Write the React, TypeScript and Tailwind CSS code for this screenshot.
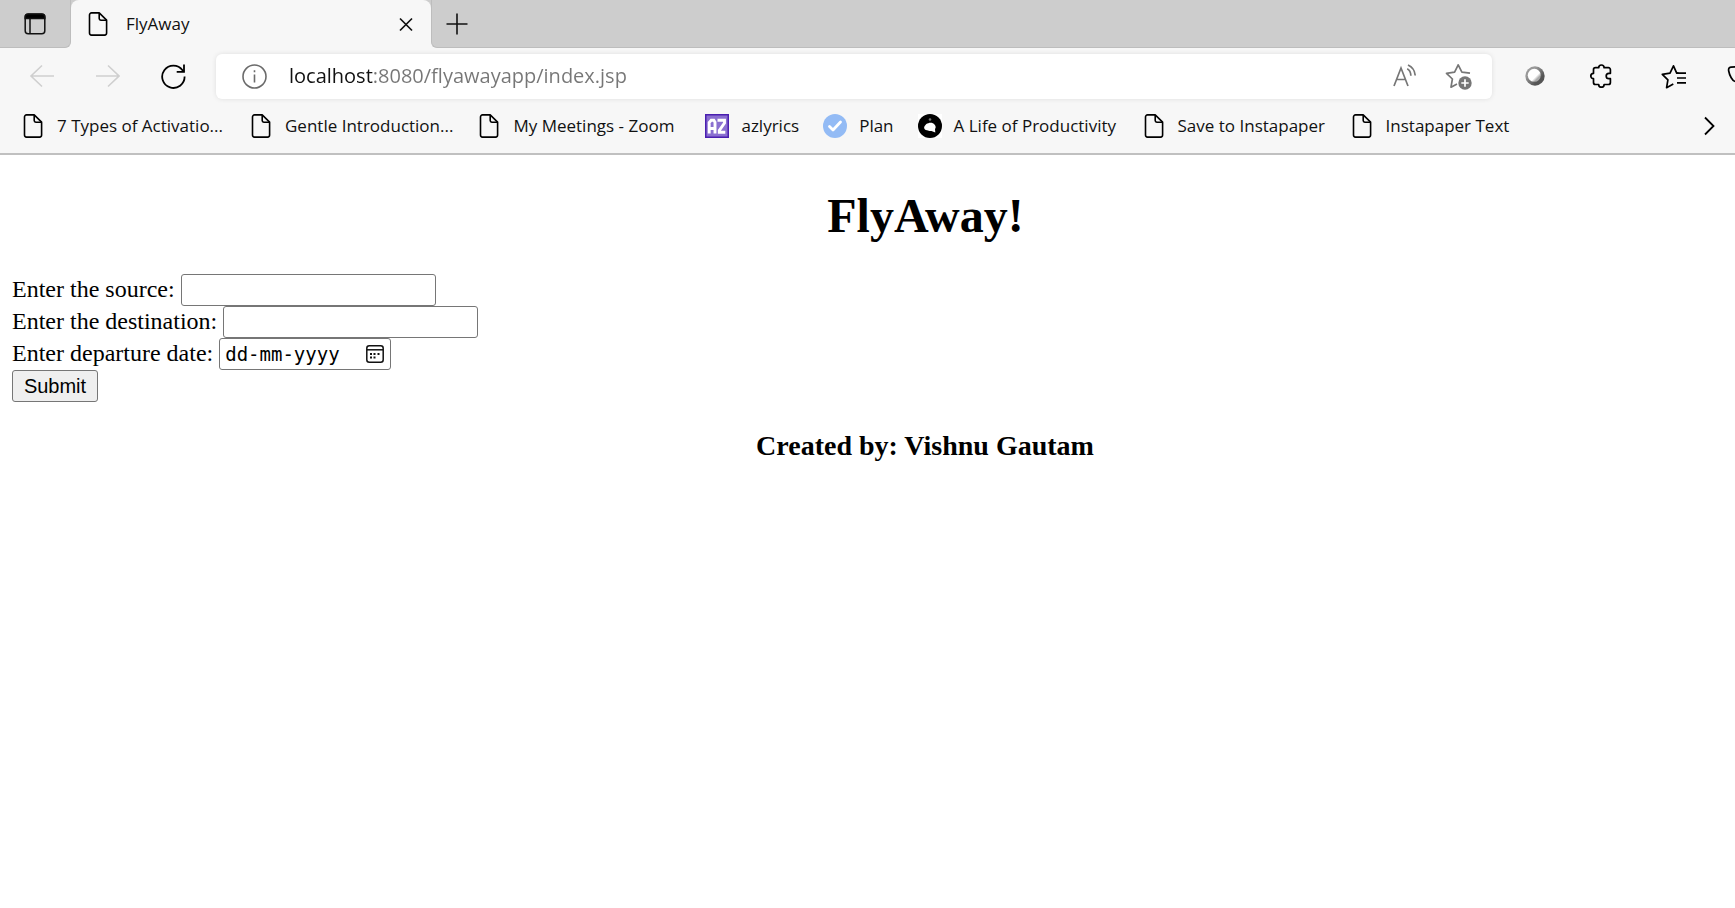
import type { ReactNode } from "react";

function FileIcon() {
  return (
    <svg viewBox="0 0 24 24" className="size-6 shrink-0" fill="none" stroke="#000" strokeWidth="1.6" strokeLinejoin="round">
      <path d="M5.500 0.900h7.700l7.400 7.200v13a2 2 0 0 1-2 2H5.500a2 2 0 0 1-2-2V2.900a2 2 0 0 1 2-2z" />
      <path d="M13.200 1v5.600a1.600 1.600 0 0 0 1.600 1.600h5.700" />
    </svg>
  );
}

function AzIcon() {
  return (
    <svg viewBox="0 0 24 24" className="size-6 shrink-0">
      <rect x="0.75" y="0.75" width="22.5" height="22.5" fill="#8a6fd0" stroke="#4a1fb0" strokeWidth="1.5" />
      <path d="M4.200 19.500V8.500l2-2.300h2.600l1.200 2v11.300M4.500 14.500h5.500M12.500 6.300h7V9l-5.200 7.500v1.800h6" fill="none" stroke="#fff" strokeWidth="2.900" />
    </svg>
  );
}

function PlanIcon() {
  return (
    <svg viewBox="0 0 24 24" className="size-6 shrink-0">
      <circle cx="12" cy="12" r="12" fill="#93bbf5" />
      <path d="M6.500 12.500l3.500 3.500 7.500-8" fill="none" stroke="#fff" strokeWidth="2.800" strokeLinecap="round" strokeLinejoin="round" />
    </svg>
  );
}

function ProductivityIcon() {
  return (
    <svg viewBox="0 0 24 24" className="size-6 shrink-0">
      <rect width="24" height="24" fill="#fff" />
      <circle cx="12" cy="12" r="12" fill="#000" />
      <circle cx="12" cy="5.500" r="1.300" fill="#777" />
      <path d="M7.500 11c1-1.500 2.500-1.500 4-2.200 2-.3 4 .2 5 1.700 1.500 1.500 1.500 3.500.5 4.500l.3 3.500-3.800-1.500c-2 .5-3-.7-4.500-.7-3.500-.5-3.500-3.800-1.500-5.300z" fill="#fff" />
    </svg>
  );
}

const bookmarks: { label: string; icon: ReactNode; width: string }[] = [
  { label: "7 Types of Activatio...", icon: <FileIcon />, width: "min-w-[168px]" },
  { label: "Gentle Introduction...", icon: <FileIcon />, width: "min-w-[168px]" },
  { label: "My Meetings - Zoom", icon: <FileIcon />, width: "min-w-[168px]" },
  { label: "azlyrics", icon: <AzIcon />, width: "min-w-[56px]" },
  { label: "Plan", icon: <PlanIcon />, width: "min-w-[33px]" },
  { label: "A Life of Productivity", icon: <ProductivityIcon />, width: "min-w-[164px]" },
  { label: "Save to Instapaper", icon: <FileIcon />, width: "min-w-[148px]" },
  { label: "Instapaper Text", icon: <FileIcon />, width: "min-w-[120px]" },
];

function TabStrip() {
  return (
    <div className="flex h-12 items-stretch overflow-hidden bg-[#f7f7f7]">
      <div className="flex w-[71px] items-center justify-center rounded-br-md border-r border-b border-[#bdbdbd] bg-[#cdcdcd]">
        <button type="button" aria-label="Tab actions" className="flex">
          <svg viewBox="0 0 24 24" className="size-6" fill="none" stroke="#111" strokeWidth="1.5">
            <rect x="2.200" y="2.200" width="19.600" height="19.600" rx="3" />
            <path d="M2.200 6.500V5a3 3 0 0 1 3-3h13.600a3 3 0 0 1 3 3v1.500z" fill="#000" />
            <path d="M7 6v16" />
          </svg>
        </button>
      </div>
      <div className="flex w-[360px] bg-[#cdcdcd]">
        <div className="flex flex-1 items-center rounded-t-lg bg-[#f7f7f7] px-[15px]">
          <FileIcon />
          <span className="flex-1 pl-4 text-[17px] text-[#111]">FlyAway</span>
          <button type="button" aria-label="Close tab" className="flex">
            <svg viewBox="0 0 20 20" className="size-5" fill="none" stroke="#111" strokeWidth="1.700">
              <path d="M4 4.500l12 12M16 4.500l-12 12" />
            </svg>
          </button>
        </div>
      </div>
      <div className="flex flex-1 items-center rounded-bl-md border-b border-l border-[#bdbdbd] bg-[#cdcdcd] pl-[13px]">
        <button type="button" aria-label="New tab" className="flex">
          <svg viewBox="0 0 24 24" className="size-6" fill="none" stroke="#111" strokeWidth="1.600">
            <path d="M12 1.500v21M1.500 12h21" />
          </svg>
        </button>
      </div>
    </div>
  );
}

function Toolbar() {
  return (
    <div className="flex h-14 items-center pl-[29px]">
      <div className="flex w-[187px] shrink-0 items-center gap-[41px]">
        <button type="button" aria-label="Back" className="flex" disabled>
          <svg viewBox="0 0 25 24" className="h-6 w-[25px]" fill="none" stroke="#cfcfcf" strokeWidth="1.600">
            <path d="M13 1.500L2 12l11 10.500M2 12h23" />
          </svg>
        </button>
        <button type="button" aria-label="Forward" className="flex" disabled>
          <svg viewBox="0 0 25 24" className="h-6 w-[25px]" fill="none" stroke="#cfcfcf" strokeWidth="1.600">
            <path d="M13 1.500L24 12 13 22.500M24 12H1" />
          </svg>
        </button>
        <button type="button" aria-label="Refresh" className="flex">
          <svg viewBox="0 0 25 25" className="size-[25px]" fill="none" stroke="#000" strokeWidth="1.800">
            <path d="M23.600 12.500A11.200 11.200 0 1 1 21.500 6.200l1.500 1.500" />
            <path d="M23 .5v7.300h-7.300" />
          </svg>
        </button>
      </div>
      <div className="flex h-[45px] flex-1 items-center rounded-md bg-white pr-[20px] pl-[26px] shadow-[0_0_5px_rgba(0,0,0,0.1)]">
        <svg viewBox="0 0 25 25" className="size-[25px] shrink-0" fill="none" stroke="#6b6b6b" strokeWidth="1.600">
          <circle cx="12.500" cy="12.500" r="11.500" />
          <path d="M12.500 10.500v8M12.500 6.300v2" />
        </svg>
        <input
          aria-label="Address"
          defaultValue="localhost:8080/flyawayapp/index.jsp"
          className="ml-[22px] min-w-0 flex-1 bg-[linear-gradient(to_right,#111_84px,#767676_84px)] bg-clip-text text-[20px] text-transparent outline-none"
        />
        <button type="button" aria-label="Read aloud" className="flex">
          <svg viewBox="0 0 24 24" className="size-6" fill="none" stroke="#767676" strokeWidth="1.700">
            <path d="M2 22L9 4 16 22M4.800 15.500h8.500" />
            <path d="M15.200 4.800c2.500 1.200 3.500 3.500 3.700 7M16 1c4.500 2 6.800 5 7.200 10.500" />
          </svg>
        </button>
        <button type="button" aria-label="Add to favorites" className="ml-[29px] flex">
          <svg viewBox="0 0 27 27" className="size-[27px]" fill="none" stroke="#767676" strokeWidth="1.700" strokeLinejoin="round">
            <path d="M25 10.200l-8.100-1.100L13.200 1.800 9.600 9.100 1.500 10.300l5.900 5.700-1.400 8.200 6-3.200" />
            <circle cx="20" cy="20" r="6.700" fill="#767676" stroke="none" />
            <path d="M20 16.300v7.400M16.300 20h7.400" stroke="#fff" />
          </svg>
        </button>
      </div>
      <div className="flex w-[243px] shrink-0 items-center overflow-hidden pl-[32px]">
        <button type="button" aria-label="Extension" className="flex">
          <svg viewBox="0 0 22 22" className="size-[22px]">
            <defs>
              <linearGradient id="ring" x1="0" y1="0" x2="1" y2="1">
                <stop offset="0.3" stopColor="#999" />
                <stop offset="0.7" stopColor="#555" />
              </linearGradient>
              <linearGradient id="ball" x1="0" y1="0" x2="1" y2="1">
                <stop offset="0.6" stopColor="#fff" />
                <stop offset="0.75" stopColor="#aaa" />
              </linearGradient>
            </defs>
            <circle cx="11" cy="11" r="9.700" fill="url(#ring)" />
            <circle cx="10.300" cy="10.300" r="6.500" fill="url(#ball)" />
          </svg>
        </button>
        <button type="button" aria-label="Extensions" className="ml-[43px] flex">
          <svg viewBox="0 0 24 24" className="size-6" fill="none" stroke="#000" strokeWidth="1.700" strokeLinejoin="round">
            <path d="M6.500 3.700h3.200a2.700 2.700 0 0 1 5.400 0h4.300a2 2 0 0 1 2 2v3.600h-1.500a2.700 2.700 0 0 0 0 5.400h1.500v3.800a2 2 0 0 1-2 2h-4.300a2.700 2.700 0 0 1-5.400 0H6.500a2 2 0 0 1-2-2v-3.800a2.700 2.700 0 0 1 0-5.400V5.700a2 2 0 0 1 2-2z" />
          </svg>
        </button>
        <div className="ml-[24px] h-6 w-0.5 bg-[#cfcfcf]" />
        <button type="button" aria-label="Favorites" className="ml-[24px] flex">
          <svg viewBox="0 0 26 25" className="h-[25px] w-[26px]" fill="none" stroke="#000" strokeWidth="1.700" strokeLinejoin="round">
            <path d="M17.500 9.100h-1.800L12.500 1.800 9 9.100 1.300 10.300l5.600 5.500-1.300 7.900 6.700-3.600" />
            <path d="M16 9.200h9M16 14h9M16 18.800h9" />
          </svg>
        </button>
        <button type="button" aria-label="Browser essentials" className="ml-[40px] flex">
          <svg viewBox="0 0 24 24" className="size-6" fill="none" stroke="#000" strokeWidth="1.700">
            <path d="M8 17.500c-2.500-.5-5.500-6-6.300-10.500C1.300 4.500 2 3.500 4 3.200L20 1.500" />
          </svg>
        </button>
      </div>
    </div>
  );
}

function BookmarksBar() {
  return (
    <nav aria-label="Bookmarks" className="flex h-[49px] items-center pr-[14px] pb-[5px] pl-[21px]">
      <ul className="flex flex-1 items-center gap-6">
        {bookmarks.map((b) => (
          <li key={b.label}>
            <a href="#" className="flex items-center gap-3 text-[17px] whitespace-nowrap text-[#111]">
              {b.icon}
              <span className={b.width}>{b.label}</span>
            </a>
          </li>
        ))}
      </ul>
      <button type="button" aria-label="More bookmarks" className="flex">
        <svg viewBox="0 0 24 24" className="size-6" fill="none" stroke="#000" strokeWidth="1.800">
          <path d="M8 3.500l8.500 8.500L8 20.500" />
        </svg>
      </button>
    </nav>
  );
}

const fieldClass = "h-8 w-[255px] rounded-[3px] border border-[#767676] bg-white px-1 text-[20px] text-black";

export default function App() {
  return (
    <div className="min-h-screen overflow-x-hidden bg-white">
      <header className="border-b-2 border-[#c0c0c0] bg-[#f7f7f7] font-['Open_Sans',sans-serif]">
        <TabStrip />
        <Toolbar />
        <BookmarksBar />
      </header>
      <main className="px-3 pt-[33px] font-['Liberation_Serif',serif] text-[24px] leading-[30px] text-black">
        <h1 className="pl-[116px] text-center text-[48px] leading-[56px] font-bold">FlyAway!</h1>
        <form className="mt-[30px]">
          <div className="flex h-8 items-start gap-1.5">
            <label htmlFor="source">Enter the source:</label>
            <input id="source" className={fieldClass} />
          </div>
          <div className="flex h-8 items-start gap-1.5">
            <label htmlFor="destination">Enter the destination:</label>
            <input id="destination" className={fieldClass} />
          </div>
          <div className="flex h-8 items-start gap-1.5">
            <label htmlFor="date">Enter departure date:</label>
            <div className="flex h-8 w-[172px] items-center rounded-[3px] border border-[#767676] pr-1.5 pl-[5px]">
              <input
                id="date"
                placeholder="dd-mm-yyyy"
                className="min-w-0 flex-1 font-['DejaVu_Sans_Mono',monospace] text-[19px] outline-none placeholder:text-black"
              />
              <button type="button" aria-label="Open calendar" className="flex">
                <svg viewBox="0 0 18 18" className="size-[18px]" fill="none" stroke="#111" strokeWidth="1.500">
                  <rect x="0.800" y="0.800" width="16.400" height="16.400" rx="2.500" />
                  <path d="M1 4.800h16" />
                  <path d="M7.500 9h2M11.500 9h2M4 12.500h2M7.500 12.500h2M4 9h2" strokeWidth="2" />
                </svg>
              </button>
            </div>
          </div>
          <button type="button" className="block h-8 w-[86px] rounded-[3px] border border-[#767676] bg-[#efefef] font-['Liberation_Sans',sans-serif] text-[20px] leading-7">
            Submit
          </button>
        </form>
        <h3 className="mt-7 pl-[115px] text-center text-[28px] leading-8 font-bold">Created by: Vishnu Gautam</h3>
      </main>
    </div>
  );
}
